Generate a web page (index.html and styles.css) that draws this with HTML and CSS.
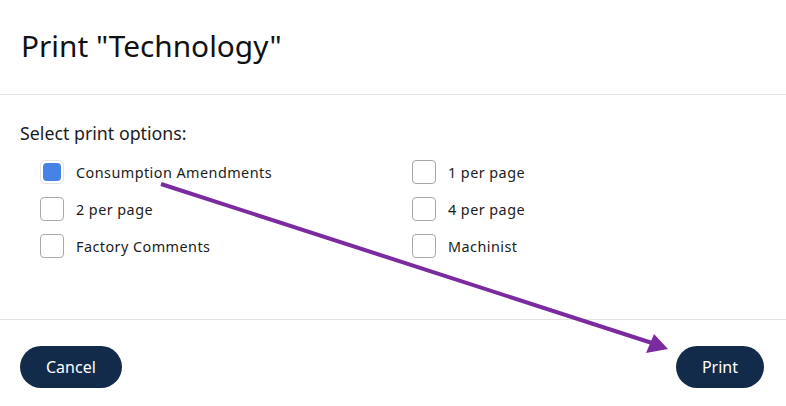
FILE: index.html
```html
<!DOCTYPE html>
<html lang="en">
<head>
<meta charset="utf-8">
<title>Print</title>
<link rel="stylesheet" href="styles.css">
</head>
<body>
<div class="dialog">
  <header class="dialog-header">
    <h1 class="dialog-title">Print "Technology"</h1>
  </header>
  <section class="dialog-body">
    <p class="options-label">Select print options:</p>
    <div class="options-grid">
      <label class="option"><span class="box checked"><span class="fill"></span></span><span class="option-text">Consumption Amendments</span></label>
      <label class="option"><span class="box"></span><span class="option-text">1 per page</span></label>
      <label class="option"><span class="box"></span><span class="option-text">2 per page</span></label>
      <label class="option"><span class="box"></span><span class="option-text">4 per page</span></label>
      <label class="option"><span class="box"></span><span class="option-text">Factory Comments</span></label>
      <label class="option"><span class="box"></span><span class="option-text">Machinist</span></label>
    </div>
  </section>
  <footer class="dialog-footer">
    <button class="btn">Cancel</button>
    <button class="btn">Print</button>
  </footer>
  <svg class="annotation" width="786" height="406" viewBox="0 0 786 406">
    <line x1="161" y1="184" x2="652" y2="343" stroke="#7b2a9f" stroke-width="4" stroke-linecap="butt"/>
    <polygon points="668,349 654,334 646,353" fill="#7b2a9f"/>
  </svg>
</div>
</body>
</html>
```
FILE: styles.css
```css
* { box-sizing: border-box; }
html, body { margin: 0; padding: 0; background: #fff; }
body {
  font-family: "Noto Sans", "Open Sans", sans-serif;
  color: #1c1c1c;
  width: 786px;
  height: 406px;
  overflow: hidden;
}
.dialog { position: relative; width: 786px; height: 406px; }
.dialog-header {
  height: 95px;
  border-bottom: 1px solid #e3e3e3;
  padding: 0 21px;
  display: flex;
  align-items: center;
}
.dialog-title {
  margin: 0;
  font-size: 29.8px;
  font-weight: 400;
  color: #111;
  line-height: 1;
  padding-bottom: 2px;
}
.dialog-body {
  height: 225px;
  border-bottom: 1px solid #e3e3e3;
  padding: 25px 20px 0 20px;
}
.options-label {
  margin: 0;
  font-size: 17.8px;
  line-height: 26px;
}
.options-grid {
  display: grid;
  grid-template-columns: 372px 1fr;
  row-gap: 13px;
  padding-left: 20px;
  margin-top: 14px;
}
.option {
  display: flex;
  align-items: center;
  gap: 12px;
  height: 24px;
  font-size: 14.4px;
  letter-spacing: 0.45px;
}
.box {
  width: 24px;
  height: 24px;
  border: 1px solid #a9a9a9;
  border-radius: 4px;
  flex: none;
  display: flex;
  align-items: center;
  justify-content: center;
}
.box.checked { border-color: #e4e4e4; }
.fill {
  width: 18px;
  height: 18px;
  border-radius: 4px;
  background: #4482e8;
}
.dialog-footer {
  display: flex;
  justify-content: space-between;
  padding: 26px 22px 0 20px;
}
.btn {
  height: 42px;
  border: none;
  border-radius: 21px;
  background: #132b4a;
  color: #fff;
  font-family: inherit;
  font-size: 16px;
  padding: 0 26px;
}
.annotation {
  position: absolute;
  left: 0;
  top: 0;
  pointer-events: none;
}
```
